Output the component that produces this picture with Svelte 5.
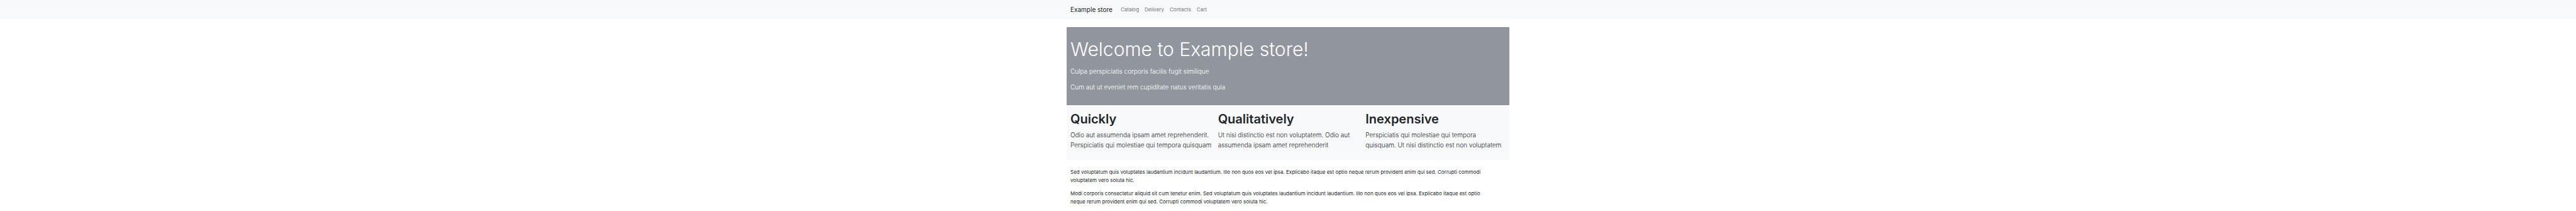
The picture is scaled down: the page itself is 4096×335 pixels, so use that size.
<script>
  const links = ['Catalog', 'Delivery', 'Contacts', 'Cart'];
  const features = [
    { title: 'Quickly', text: 'Odio aut assumenda ipsam amet reprehenderit.\nPerspiciatis qui molestiae qui tempora quisquam' },
    { title: 'Qualitatively', text: 'Ut nisi distinctio est non voluptatem. Odio aut\nassumenda ipsam amet reprehenderit' },
    { title: 'Inexpensive', text: 'Perspiciatis qui molestiae qui tempora\nquisquam. Ut nisi distinctio est non voluptatem' }
  ];
  const paragraphs = [
    'Sed voluptatum quis voluptates laudantium incidunt laudantium. Illo non quos eos vel ipsa. Explicabo itaque est optio neque rerum provident enim qui sed. Corrupti commodi\nvoluptatem vero soluta hic.',
    'Modi corporis consectetur aliquid sit cum tenetur enim. Sed voluptatum quis voluptates laudantium incidunt laudantium. Illo non quos eos vel ipsa. Explicabo itaque est optio\nneque rerum provident enim qui sed. Corrupti commodi voluptatem vero soluta hic.'
  ];
</script>

<header class="navbar">
  <nav class="container nav">
    <a class="brand" href="#home">Example store</a>
    <ul class="links">
      {#each links as link}
        <li><a href={'#' + link.toLowerCase()}>{link}</a></li>
      {/each}
    </ul>
  </nav>
</header>

<main class="container">
  <section class="hero">
    <h1>Welcome to Example store!</h1>
    <p class="lead">Culpa perspiciatis corporis facilis fugit similique</p>
    <p class="lead">Cum aut ut eveniet rem cupiditate natus veritatis quia</p>
  </section>

  <section class="features">
    {#each features as feature}
      <article>
        <h2>{feature.title}</h2>
        <p class="lead">{feature.text}</p>
      </article>
    {/each}
  </section>

  <section class="about">
    {#each paragraphs as paragraph}
      <p>{paragraph}</p>
    {/each}
  </section>
</main>

<style>
  :global(body) {
    margin: 0;
    background: #fff;
    color: #212529;
    font-family: Inter, "Liberation Sans", sans-serif;
    font-size: 8px;
    line-height: 13px;
  }
  h1, h2, p, ul { margin: 0; padding: 0; }
  p { white-space: pre-line; }
  a { text-decoration: none; }

  .container {
    box-sizing: border-box;
    width: 100%;
    max-width: 704px;
    margin: 0 auto;
  }
  .navbar { background: #f8f9fb; }
  .nav {
    display: flex;
    align-items: center;
    gap: 13px;
    padding: 7px 6px;
  }
  .brand {
    color: #18191a;
    font-size: 10px;
    line-height: 16px;
  }
  .links {
    display: flex;
    gap: 9px;
    list-style: none;
  }
  .links a { color: #747577; }

  .lead {
    font-size: 10px;
    font-weight: 300;
    line-height: 16px;
  }
  .hero {
    margin-top: 13px;
    padding: 15px 6px 21px;
    background: #91969e;
    color: #fff;
  }
  h1 {
    margin-bottom: 6px;
    font-size: 30px;
    font-weight: 300;
    line-height: 41px;
  }
  .hero .lead + .lead { margin-top: 9px; }

  .features {
    display: grid;
    grid-template-columns: repeat(3, 1fr);
    background: #f8f9fb;
  }
  article { padding: 9px 0 16px 6px; }
  h2 {
    margin-bottom: 4px;
    font-size: 20px;
    font-weight: 600;
    line-height: 26px;
  }
  .about {
    display: grid;
    gap: 8px;
    padding: 13px 6px 8px;
  }
</style>
